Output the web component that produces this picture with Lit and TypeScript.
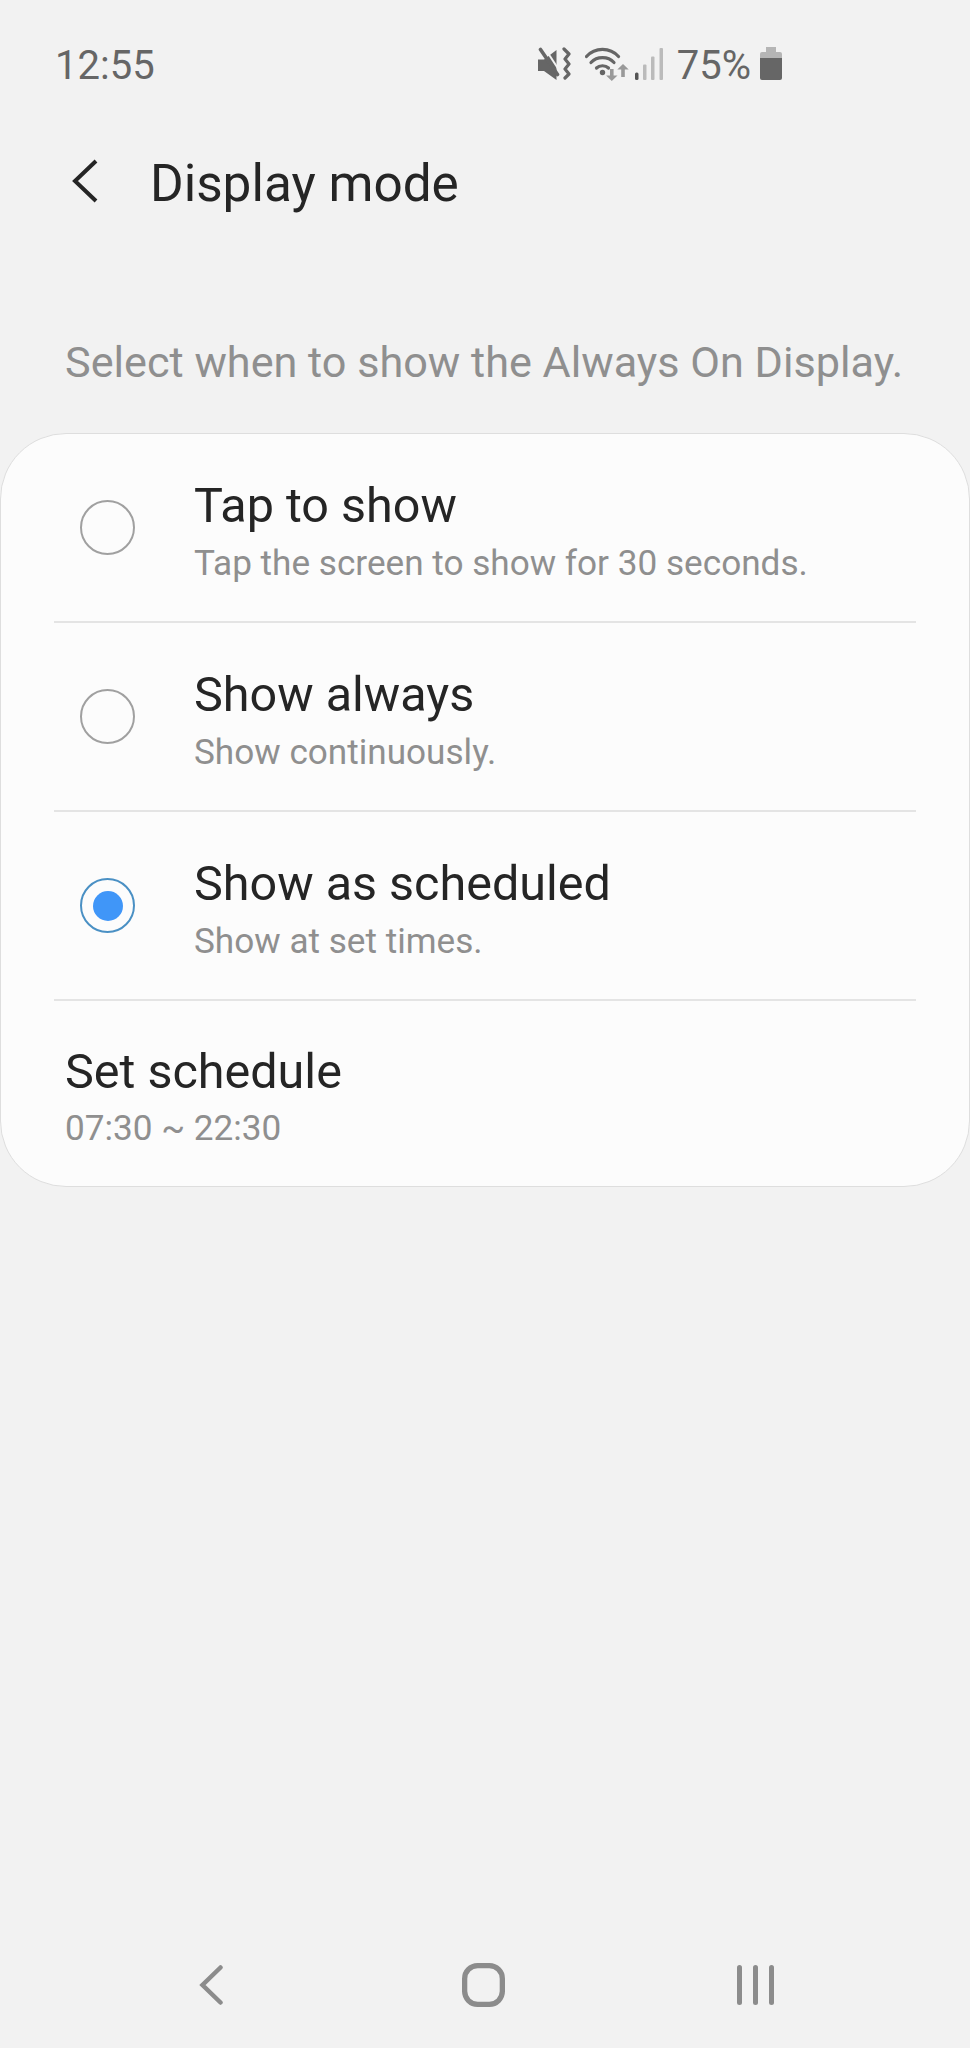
import { LitElement, html, css, svg } from "lit";
import { customElement } from "lit/decorators.js";

const options = [
  { title: "Tap to show", sub: "Tap the screen to show for 30 seconds.", on: false },
  { title: "Show always", sub: "Show continuously.", on: false },
  { title: "Show as scheduled", sub: "Show at set times.", on: true },
];

const muteIcon = svg`<svg class="mute" width="33" height="33" viewBox="0 0 33 33">
  <path fill="#666" d="M0 12.500h6L18.500 3v30L6 24H0z"/>
  <path stroke="#f2f2f2" stroke-width="2" d="M6 0l15 23" fill="none"/>
  <path stroke="#666" stroke-width="3.600" stroke-linecap="round" d="M2.500 2.500l17 25" fill="none"/>
  <path stroke="#666" stroke-width="3.200" stroke-linecap="round" stroke-linejoin="round" fill="none" d="M26 2l5 5-4 5 4 5-4 5 4 5-4 4"/>
</svg>`;

const wifiIcon = svg`<svg class="wifi" width="46" height="34" viewBox="0 0 46 34">
  <g fill="none" stroke="#666" stroke-width="3.200" stroke-linecap="round">
    <path d="M1.500 9.500C10 0 25 0 33.500 9.500"/>
    <path d="M6 15.500C12 9 23 9 29 15.500"/>
    <path d="M11.500 21C14.500 18 20.500 18 23.500 21"/>
  </g>
  <circle cx="17.500" cy="25.500" r="2.700" fill="#666"/>
  <path fill="#999" d="M25 22h3.600v6.500h3.900L26.800 34l-5.700-5.500H25z M38 17l5.700 5.500h-3.900V30h-3.600v-7.500h-3.900z"/>
</svg>`;

const signalIcon = svg`<svg class="signal" width="28" height="32" viewBox="0 0 28 32">
  <rect x="0" y="24.500" width="3.500" height="7.500" rx="1.500" fill="#555"/>
  <rect x="8" y="16.500" width="3.500" height="15.500" rx="1" fill="#bbb"/>
  <rect x="16" y="8.500" width="3.500" height="23.500" rx="1" fill="#bbb"/>
  <rect x="24.500" y="0" width="3.500" height="32" rx="1" fill="#bbb"/>
</svg>`;

const batteryIcon = svg`<svg class="battery" width="22" height="33" viewBox="0 0 22 33">
  <path fill="#b5b5b5" d="M6 0h10v5h4a2 2 0 0 1 2 2v5H0V7a2 2 0 0 1 2-2h4z"/>
  <path fill="#666" d="M0 11h22v20a2 2 0 0 1-2 2H2a2 2 0 0 1-2-2z"/>
</svg>`;

const backIcon = svg`<svg class="back" width="26" height="44" viewBox="0 0 26 44">
  <path d="M24 2L3 22l21 20" fill="none" stroke="#252525" stroke-width="4"/>
</svg>`;

const navBack = svg`<svg width="24" height="40" viewBox="0 0 24 40">
  <path d="M21.500 2.500L3.500 20l18 17.500" fill="none" stroke="#8c8c8c" stroke-width="4.500" stroke-linecap="round"/>
</svg>`;

const navHome = svg`<svg width="43" height="44" viewBox="0 0 43 44">
  <rect x="2.650" y="2.650" width="37.700" height="38.700" rx="13" fill="none" stroke="#8c8c8c" stroke-width="5.300"/>
</svg>`;

const navRecent = svg`<svg width="37" height="40" viewBox="0 0 37 40">
  <g stroke="#8c8c8c" stroke-width="5" stroke-linecap="round">
    <path d="M2.500 2.500v35"/><path d="M18.500 2.500v35"/><path d="M34.500 2.500v35"/>
  </g>
</svg>`;

@customElement("app-root")
export class AppRoot extends LitElement {
  static styles = css`
    :host {
      display: block;
      font-family: Roboto, "Liberation Sans", sans-serif;
    }
    .page {
      height: 2048px;
      background: #f2f2f2;
      display: flex;
      flex-direction: column;
    }
    svg { display: block; flex: none; }

    .status {
      height: 47px;
      margin-top: 42px;
      padding: 0 188px 0 55px;
      display: flex;
      align-items: center;
      color: #666;
      font-size: 40px;
    }
    .status-right {
      margin-left: auto;
      display: flex;
      align-items: center;
    }
    .status-right svg { margin-bottom: 4px; }
    .wifi { margin-left: 14px; }
    .signal { margin-left: 4px; }
    .pct { margin-left: 14px; }
    .battery { margin-left: 9px; }

    .header {
      margin-top: 64px;
      height: 60px;
      padding-left: 72px;
      display: flex;
      align-items: center;
      color: #252525;
      font-size: 51.300px;
    }
    .back { margin-bottom: 4px; }
    .header span { margin-left: 52px; }

    .intro {
      margin: 125px 0 0 65px;
      font-size: 43.200px;
      line-height: 50px;
      color: #8f8f8f;
    }

    .card {
      margin-top: 45px;
      box-sizing: border-box;
      height: 754px;
      background: #fcfcfc;
      border: 1px solid #dedede;
      border-radius: 66px;
      padding: 0 53px;
    }
    .row {
      box-sizing: border-box;
      height: 189px;
      display: flex;
      align-items: center;
      border-bottom: 2px solid #e4e4e4;
    }
    .row.last { border-bottom: none; height: 186px; padding-left: 11px; }
    .radio {
      box-sizing: border-box;
      width: 55px;
      height: 55px;
      margin: 0 59px 0 26px;
      border: 2px solid #a0a0a0;
      border-radius: 50%;
      display: flex;
      align-items: center;
      justify-content: center;
      flex: none;
    }
    .radio.on { border-color: #4a90c4; }
    .radio.on i {
      display: block;
      width: 30px;
      height: 30px;
      border-radius: 50%;
      background: #4096f8;
    }
    .text { padding-top: 7px; }
    .last .text { padding-top: 5px; }
    .title {
      font-size: 48.500px;
      line-height: 56px;
      color: #252525;
    }
    .sub {
      font-size: 35.150px;
      line-height: 44px;
      margin-top: 7px;
      color: #8f8f8f;
    }
    .last .sub { margin-top: 6px; }

    .nav {
      margin-top: auto;
      height: 44px;
      margin-bottom: 41px;
      padding-left: 199px;
      display: flex;
      align-items: center;
    }
    .nav > :nth-child(2) { margin-left: 239px; }
    .nav > :nth-child(3) { margin-left: 231.500px; }
  `;

  render() {
    return html`
      <div class="page">
        <div class="status">
          <span>12:55</span>
          <div class="status-right">
            ${muteIcon} ${wifiIcon} ${signalIcon}
            <span class="pct">75%</span>
            ${batteryIcon}
          </div>
        </div>
        <div class="header">${backIcon}<span>Display mode</span></div>
        <div class="intro">Select when to show the Always On Display.</div>
        <div class="card">
          ${options.map(
            (o) => html`
              <div class="row">
                <div class="radio ${o.on ? "on" : ""}">${o.on ? html`<i></i>` : ""}</div>
                <div class="text">
                  <div class="title">${o.title}</div>
                  <div class="sub">${o.sub}</div>
                </div>
              </div>
            `
          )}
          <div class="row last">
            <div class="text">
              <div class="title">Set schedule</div>
              <div class="sub">07:30 ~ 22:30</div>
            </div>
          </div>
        </div>
        <div class="nav">${navBack}${navHome}${navRecent}</div>
      </div>
    `;
  }
}
